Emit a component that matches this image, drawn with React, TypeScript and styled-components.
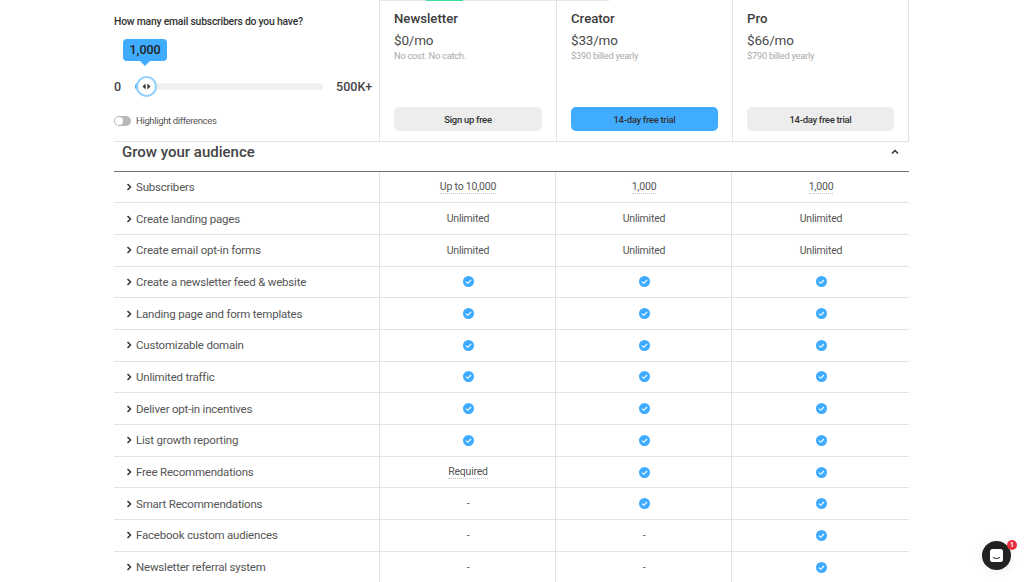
import React from "react";
import styled, { createGlobalStyle } from "styled-components";

const GlobalStyle = createGlobalStyle`
  html, body {
    margin: 0;
    padding: 0;
    height: 582px;
    overflow: hidden;
    background: #fff;
    font-family: "Roboto", "Liberation Sans", sans-serif;
    color: #333;
  }
  * { box-sizing: border-box; }
`;

const Page = styled.div`
  width: 795px;
  margin-left: 114px;
  position: relative;
`;

const TopBar = styled.div`
  position: absolute;
  left: 266px;
  top: 0;
  width: 229px;
  height: 1px;
  background: #e6e6e6;
`;

const TopBarFill = styled.div`
  position: absolute;
  left: 46px;
  top: 0;
  width: 37px;
  height: 1px;
  background: #3ddc97;
`;

const Header = styled.div`
  display: grid;
  grid-template-columns: 266px 177px 176px 176px;
  height: 142px;
  border-bottom: 1px solid #e3e3e3;
`;

const Intro = styled.div`
  border-right: 1px solid #e3e3e3;
  padding-top: 15px;
`;

const Question = styled.div`
  font-size: 10.4px;
  font-weight: 500;
  letter-spacing: -0.22px;
  line-height: 14px;
  color: #333;
`;

const SliderRow = styled.div`
  display: flex;
  align-items: center;
  margin-top: 46px;
  height: 22px;
  font-size: 12.5px;
  font-weight: 500;
  color: #444;
`;

const SliderTrack = styled.div`
  position: relative;
  margin-left: 14px;
  width: 188px;
  height: 7px;
  border-radius: 4px;
  background: #f0f0f0;
`;

const SliderFill = styled.div`
  position: absolute;
  left: 0;
  top: 0;
  width: 8px;
  height: 7px;
  border-radius: 4px;
  background: #40acff;
`;

const Thumb = styled.div`
  position: absolute;
  left: 1px;
  top: -7px;
  width: 21px;
  height: 21px;
  border-radius: 50%;
  background: #fff;
  border: 2px solid #8fd0ff;
  display: flex;
  align-items: center;
  justify-content: center;
`;

const Bubble = styled.div`
  position: absolute;
  left: -12px;
  top: -44px;
  width: 44px;
  height: 22px;
  border-radius: 4px;
  background: #40acff;
  font-size: 12.5px;
  font-weight: 500;
  color: #222;
  display: flex;
  align-items: center;
  justify-content: center;
  &::after {
    content: "";
    position: absolute;
    left: 17px;
    bottom: -5px;
    border-left: 5px solid transparent;
    border-right: 5px solid transparent;
    border-top: 5px solid #40acff;
  }
`;

const SliderEnd = styled.span`
  margin-left: 13px;
`;

const ToggleRow = styled.div`
  display: flex;
  align-items: center;
  gap: 5px;
  margin-top: 18px;
  font-size: 9.5px;
  letter-spacing: -0.35px;
  color: #555;
  line-height: 12px;
`;

const Toggle = styled.div`
  width: 17px;
  height: 10px;
  border-radius: 5px;
  background: #b9b9b9;
  padding: 1px;
`;

const ToggleKnob = styled.div`
  width: 8px;
  height: 8px;
  border-radius: 50%;
  background: #fff;
`;

const Plan = styled.div`
  border-right: 1px solid #e3e3e3;
  padding: 10px 14px 0 14px;
  display: flex;
  flex-direction: column;
`;

const PlanName = styled.div`
  font-size: 13.2px;
  font-weight: 500;
  line-height: 17px;
  color: #3c3c3c;
`;

const PlanPrice = styled.div`
  font-size: 13.5px;
  letter-spacing: -0.2px;
  line-height: 18px;
  margin-top: 4px;
  color: #4a4a4a;
`;

const PlanNote = styled.div`
  font-size: 9.4px;
  letter-spacing: -0.3px;
  line-height: 12px;
  margin-top: 1px;
  color: #aaa;
`;

const PlanButton = styled.button<{ $primary?: boolean }>`
  margin-top: auto;
  margin-bottom: 10px;
  height: 24px;
  border: 0;
  border-radius: 5px;
  font-family: inherit;
  font-size: 9.5px;
  font-weight: 500;
  letter-spacing: -0.3px;
  color: #333;
  background: ${(props) => (props.$primary ? "#40acff" : "#ededed")};
`;

const SectionHead = styled.div`
  height: 29.5px;
  border-bottom: 1px solid #777;
  display: flex;
  align-items: center;
  justify-content: space-between;
  padding: 0 10px 8px 8px;
  font-size: 15px;
  font-weight: 500;
  color: #444;
`;

const Row = styled.div`
  display: grid;
  grid-template-columns: 266px 176px 176px 177px;
  height: 31.7px;
  border-bottom: 1px solid #e3e3e3;
`;

const Feature = styled.div`
  display: flex;
  align-items: center;
  gap: 3px;
  padding-left: 11px;
  border-right: 1px solid #e3e3e3;
  font-size: 11.5px;
  letter-spacing: -0.2px;
  color: #555;
`;

const Cell = styled.div`
  display: flex;
  align-items: center;
  justify-content: center;
  padding-left: 1px;
  font-size: 10.5px;
  letter-spacing: -0.2px;
  color: #555;
  border-right: 1px solid #e3e3e3;
  &:last-child {
    border-right: 0;
  }
`;

const Dotted = styled.span`
  border-bottom: 1px dotted #c4c4c4;
  line-height: 13px;
`;

const Launcher = styled.div`
  position: fixed;
  left: 982px;
  top: 541px;
  width: 29px;
  height: 29px;
  border-radius: 50%;
  background: #222;
  box-shadow: 0 1px 12px rgba(0, 0, 0, 0.08);
  display: flex;
  align-items: center;
  justify-content: center;
`;

const Badge = styled.div`
  position: absolute;
  right: -6px;
  top: -1px;
  width: 10px;
  height: 10px;
  border-radius: 50%;
  background: #e8313f;
  color: #fff;
  font-size: 7px;
  font-weight: 700;
  display: flex;
  align-items: center;
  justify-content: center;
`;

const Chevron = ({ up }: { up?: boolean }) => (
  <svg width="8" height="8" viewBox="0 0 8 8" fill="none" stroke="#333" strokeWidth="1.5">
    {up ? <path d="M1 5.5 L4 2.5 L7 5.5" /> : <path d="M2.5 1 L5.5 4 L2.5 7" />}
  </svg>
);

const Check = () => (
  <svg width="11" height="11" viewBox="0 0 11 11">
    <circle cx="5.5" cy="5.5" r="5.5" fill="#40acff" />
    <path d="M3 5.7 L4.8 7.3 L8 4" fill="none" stroke="#fff" strokeWidth="1.1" />
  </svg>
);

type Value = string | boolean;

const rows: { name: string; values: Value[] }[] = [
  { name: "Subscribers", values: ["~Up to 10,000", "~1,000", "~1,000"] },
  { name: "Create landing pages", values: ["Unlimited", "Unlimited", "Unlimited"] },
  { name: "Create email opt-in forms", values: ["Unlimited", "Unlimited", "Unlimited"] },
  { name: "Create a newsletter feed & website", values: [true, true, true] },
  { name: "Landing page and form templates", values: [true, true, true] },
  { name: "Customizable domain", values: [true, true, true] },
  { name: "Unlimited traffic", values: [true, true, true] },
  { name: "Deliver opt-in incentives", values: [true, true, true] },
  { name: "List growth reporting", values: [true, true, true] },
  { name: "Free Recommendations", values: ["~Required", true, true] },
  { name: "Smart Recommendations", values: ["-", true, true] },
  { name: "Facebook custom audiences", values: ["-", "-", true] },
  { name: "Newsletter referral system", values: ["-", "-", true] },
];

const renderValue = (value: Value) => {
  if (value === true) return <Check />;
  if (typeof value === "string" && value.startsWith("~")) {
    return <Dotted>{value.slice(1)}</Dotted>;
  }
  return value;
};

export default function App() {
  return (
    <Page>
      <GlobalStyle />
      <TopBar>
        <TopBarFill />
      </TopBar>
      <Header>
        <Intro>
          <Question>How many email subscribers do you have?</Question>
          <SliderRow>
            0
            <SliderTrack>
              <SliderFill />
              <Bubble>1,000</Bubble>
              <Thumb>
                <svg width="9" height="7" viewBox="0 0 9 7" fill="#333">
                  <path d="M3.6 0.5 V6.5 L0.5 3.5 Z M5.4 0.5 V6.5 L8.5 3.5 Z" />
                </svg>
              </Thumb>
            </SliderTrack>
            <SliderEnd>500K+</SliderEnd>
          </SliderRow>
          <ToggleRow>
            <Toggle>
              <ToggleKnob />
            </Toggle>
            Highlight differences
          </ToggleRow>
        </Intro>
        <Plan>
          <PlanName>Newsletter</PlanName>
          <PlanPrice>$0/mo</PlanPrice>
          <PlanNote>No cost. No catch.</PlanNote>
          <PlanButton>Sign up free</PlanButton>
        </Plan>
        <Plan>
          <PlanName>Creator</PlanName>
          <PlanPrice>$33/mo</PlanPrice>
          <PlanNote>$390 billed yearly</PlanNote>
          <PlanButton $primary>14-day free trial</PlanButton>
        </Plan>
        <Plan>
          <PlanName>Pro</PlanName>
          <PlanPrice>$66/mo</PlanPrice>
          <PlanNote>$790 billed yearly</PlanNote>
          <PlanButton>14-day free trial</PlanButton>
        </Plan>
      </Header>
      <SectionHead>
        Grow your audience
        <Chevron up />
      </SectionHead>
      {rows.map((row) => (
        <Row key={row.name}>
          <Feature>
            <Chevron />
            {row.name}
          </Feature>
          {row.values.map((value, i) => (
            <Cell key={i}>{renderValue(value)}</Cell>
          ))}
        </Row>
      ))}
      <Launcher>
        <svg width="15" height="15" viewBox="0 0 15 15">
          <rect x="1" y="1" width="13" height="13" rx="2.5" fill="#fff" />
          <path d="M4 9.5 Q7.5 11.8 11 9.5" fill="none" stroke="#222" strokeWidth="1" />
        </svg>
        <Badge>1</Badge>
      </Launcher>
    </Page>
  );
}
